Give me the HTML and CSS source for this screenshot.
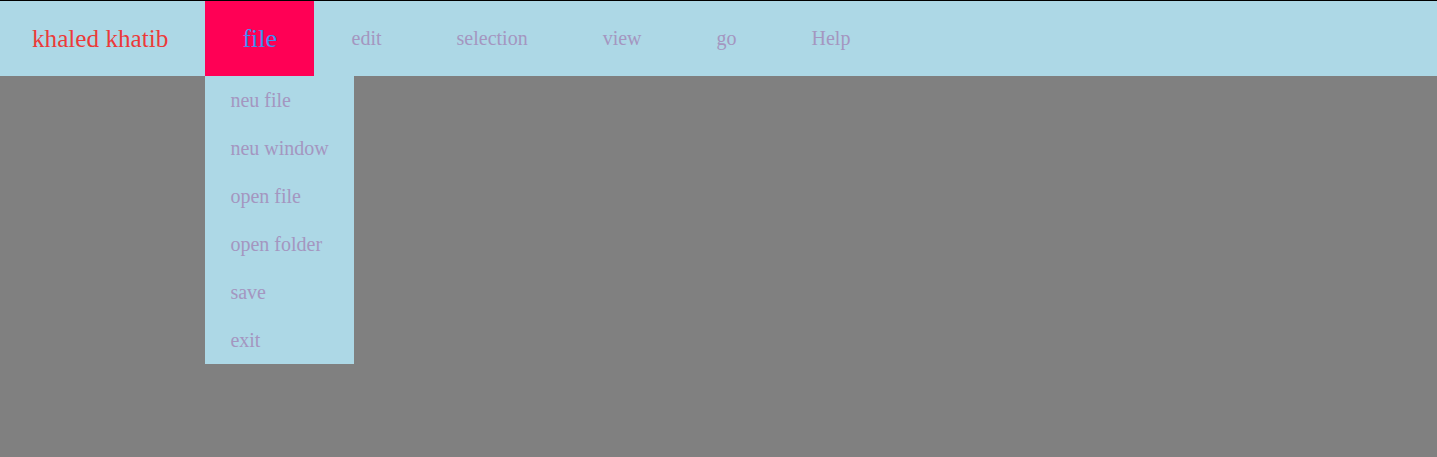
FILE: index.html
```html
<!DOCTYPE html>
<html>
<head>
<meta charset="utf-8">
<link rel="stylesheet" href="styles.css">
</head>
<body>
<nav class="bar">
  <div class="logo">khaled khatib</div>
  <ul class="menu">
    <li class="item active">
      <span class="label big">file</span>
      <ul class="dropdown">
        <li>neu file</li>
        <li>neu window</li>
        <li>open file</li>
        <li>open folder</li>
        <li>save</li>
        <li>exit</li>
      </ul>
    </li>
    <li class="item"><span class="label">edit</span></li>
    <li class="item"><span class="label">selection</span></li>
    <li class="item"><span class="label">view</span></li>
    <li class="item"><span class="label">go</span></li>
    <li class="item"><span class="label">Help</span></li>
  </ul>
</nav>
</body>
</html>
```

FILE: styles.css
```css
html, body {
  margin: 0;
  padding: 0;
  height: 100%;
}
body {
  background: #808080;
  font-family: "Liberation Serif", "Times New Roman", serif;
}
.bar {
  display: flex;
  align-items: stretch;
  height: 75px;
  background: #add8e6;
  border-top: 1px solid #000;
}
.logo {
  display: flex;
  align-items: center;
  padding: 0 37px 0 32px;
  font-size: 25.2px;
  color: #ec3a3a;
}
.menu {
  display: flex;
  list-style: none;
  margin: 0;
  padding: 0;
}
.item {
  position: relative;
  display: flex;
  align-items: center;
  padding: 0 37.5px;
  font-size: 20px;
  color: #a496c0;
}
.item.active {
  background: #ff0055;
  padding: 0 37px;
}
.label.big {
  font-size: 26px;
  color: #3f8ef0;
}
.dropdown {
  position: absolute;
  top: 75px;
  left: 0;
  width: 149px;
  margin: 0;
  padding: 0;
  list-style: none;
  background: #add8e6;
}
.dropdown li {
  height: 48px;
  line-height: 48px;
  padding-left: 25px;
  font-size: 20px;
  color: #a496c0;
  white-space: nowrap;
}
```
